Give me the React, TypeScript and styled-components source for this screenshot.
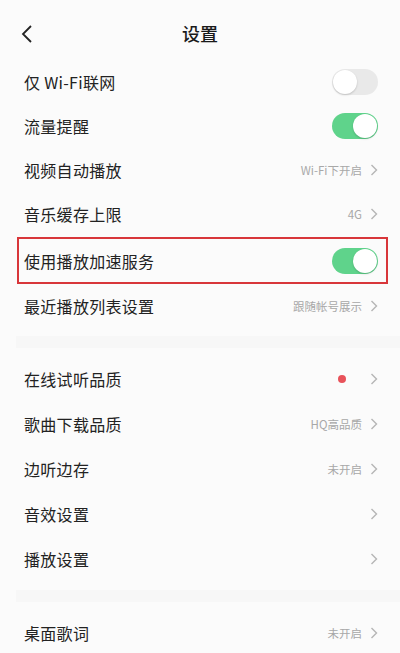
import React from 'react';
import styled, { createGlobalStyle } from 'styled-components';

const GlobalStyle = createGlobalStyle`
  html, body {
    margin: 0;
    padding: 0;
    background: #fbfbfb;
  }
  body {
    font-family: "Noto Sans CJK SC", "Noto Sans", "Liberation Sans", sans-serif;
    color: #222;
  }
`;

const Page = styled.div`
  width: 400px;
  height: 653px;
  overflow: hidden;
  background: #fbfbfb;
`;

const Header = styled.div`
  height: 60px;
  display: flex;
  align-items: center;
  justify-content: center;
  position: relative;
  padding-top: 6px;
  box-sizing: border-box;
`;

const BackButton = styled.div`
  position: absolute;
  left: 18px;
  top: 23px;
  width: 18px;
  height: 22px;
  display: flex;
  align-items: center;
  justify-content: center;
`;

const Title = styled.div`
  font-size: 18px;
  font-weight: 500;
  color: #1a1a1a;
`;

const Row = styled.div<{ $h?: number }>`
  height: ${(p) => p.$h ?? 44}px;
  display: flex;
  align-items: center;
  justify-content: space-between;
  padding: 0 22px 0 24px;
`;

const HighlightRow = styled.div`
  height: 43px;
  margin: 1px 12px 0 17px;
  border: 2px solid #d8363a;
  display: flex;
  align-items: center;
  justify-content: space-between;
  padding: 0 8px 0 5px;
`;

const Label = styled.span`
  font-size: 16px;
  color: #222;
  letter-spacing: 0.3px;
`;

const Right = styled.div`
  display: flex;
  align-items: center;
  gap: 8px;
`;

const Value = styled.span`
  font-size: 11.5px;
  color: #a8a8a8;
`;

const Dot = styled.span`
  width: 8px;
  height: 8px;
  border-radius: 50%;
  background: #e8525a;
  margin-right: 16px;
`;

const Gap = styled.div<{ $h: number }>`
  height: ${(p) => p.$h}px;
  display: flex;
  align-items: center;
`;

const Band = styled.div`
  height: 12px;
  width: 100%;
  margin-left: 16px;
  background: #f7f7f7;
`;

const Track = styled.div<{ $on: boolean }>`
  width: 46px;
  height: 26px;
  border-radius: 13px;
  background: ${(p) => (p.$on ? '#5fd38b' : '#e9e9e9')};
  position: relative;
`;

const Knob = styled.div<{ $on: boolean }>`
  position: absolute;
  top: 1px;
  left: ${(p) => (p.$on ? '21px' : '1px')};
  width: 24px;
  height: 24px;
  border-radius: 50%;
  background: #fff;
  box-shadow: 0 1px 2px rgba(0, 0, 0, 0.18);
`;

const Chevron = () => (
  <svg width="8" height="12" viewBox="0 0 8 12">
    <path d="M1.5 1 L6.5 6 L1.5 11" fill="none" stroke="#b5b5b5" strokeWidth="1.4" />
  </svg>
);

const Toggle = ({ on }: { on: boolean }) => (
  <Track $on={on}>
    <Knob $on={on} />
  </Track>
);

const Nav = ({ value, dot }: { value?: string; dot?: boolean }) => (
  <Right>
    {dot && <Dot />}
    {value && <Value>{value}</Value>}
    <Chevron />
  </Right>
);

export default function App() {
  return (
    <Page>
      <GlobalStyle />
      <Header>
        <BackButton>
          <svg width="12" height="20" viewBox="0 0 12 20">
            <path d="M10 2 L2 10 L10 18" fill="none" stroke="#222" strokeWidth="1.8" />
          </svg>
        </BackButton>
        <Title>设置</Title>
      </Header>
      <Row>
        <Label>仅 Wi-Fi联网</Label>
        <Toggle on={false} />
      </Row>
      <Row>
        <Label>流量提醒</Label>
        <Toggle on />
      </Row>
      <Row>
        <Label>视频自动播放</Label>
        <Nav value="Wi-Fi下开启" />
      </Row>
      <Row>
        <Label>音乐缓存上限</Label>
        <Nav value="4G" />
      </Row>
      <HighlightRow>
        <Label>使用播放加速服务</Label>
        <Toggle on />
      </HighlightRow>
      <Row>
        <Label>最近播放列表设置</Label>
        <Nav value="跟随帐号展示" />
      </Row>
      <Gap $h={28}>
        <Band />
      </Gap>
      <Row $h={45}>
        <Label>在线试听品质</Label>
        <Nav dot />
      </Row>
      <Row $h={45}>
        <Label>歌曲下载品质</Label>
        <Nav value="HQ高品质" />
      </Row>
      <Row $h={45}>
        <Label>边听边存</Label>
        <Nav value="未开启" />
      </Row>
      <Row $h={45}>
        <Label>音效设置</Label>
        <Nav />
      </Row>
      <Row $h={45}>
        <Label>播放设置</Label>
        <Nav />
      </Row>
      <Gap $h={29}>
        <Band />
      </Gap>
      <Row $h={45}>
        <Label>桌面歌词</Label>
        <Nav value="未开启" />
      </Row>
    </Page>
  );
}
